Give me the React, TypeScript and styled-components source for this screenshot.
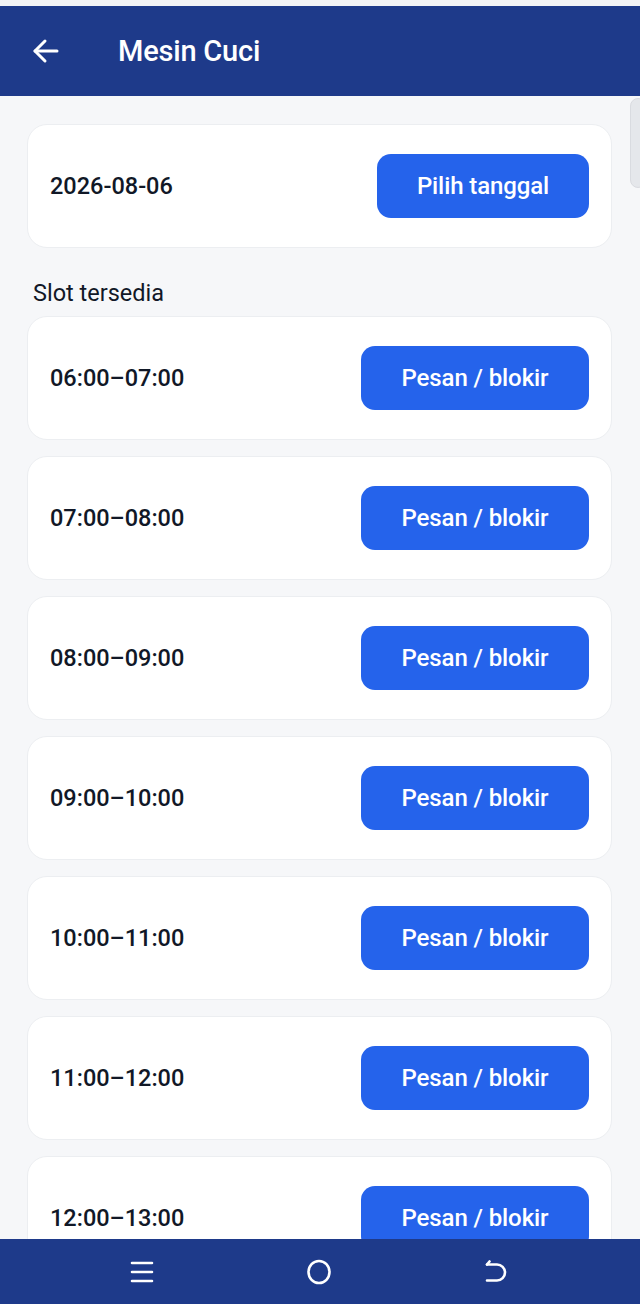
import styled, { createGlobalStyle } from "styled-components";

const GlobalStyle = createGlobalStyle`
    html, body {
        margin: 0;
        padding: 0;
        background: #f6f7f9;
        font-family: Roboto, "Noto Sans", "Liberation Sans", sans-serif;
    }
    * {
        box-sizing: border-box;
    }
`;

const Screen = styled.div`
    position: relative;
    display: flex;
    flex-direction: column;
    width: 640px;
    height: 1304px;
    overflow: hidden;
    background: #f6f7f9;
`;

const StatusStrip = styled.div`
    height: 6px;
    background: #f3f4f6;
    flex-shrink: 0;
`;

const Header = styled.header`
    display: flex;
    align-items: center;
    height: 90px;
    padding-left: 32px;
    background: #1e3a8a;
    color: white;
    flex-shrink: 0;

    .back {
        display: flex;
        width: 28px;
        height: 28px;
        margin-right: 58px;
    }

    .title {
        font-size: 29px;
        font-weight: 500;
        letter-spacing: -0.2px;
    }
`;

const Content = styled.main`
    flex: 1;
    display: flex;
    flex-direction: column;
    gap: 16px;
    padding: 28px 28px 0 27px;
    overflow: hidden;
`;

const Card = styled.div`
    display: flex;
    align-items: center;
    justify-content: space-between;
    flex-shrink: 0;
    height: 124px;
    padding: 0 22px;
    background: white;
    border: 1px solid #eceef1;
    border-radius: 20px;

    .label {
        font-size: 23.5px;
        font-weight: 500;
        color: #111827;
    }
`;

const ActionButton = styled.button<{ $width: number }>`
    width: ${(p) => p.$width}px;
    height: 64px;
    border: none;
    border-radius: 14px;
    background: #2563eb;
    color: white;
    font-family: inherit;
    font-size: 24px;
    font-weight: 500;
    letter-spacing: -0.1px;
`;

const SectionLabel = styled.div`
    margin: 17px 0 -5px 6px;
    font-size: 23.5px;
    color: #111827;
    line-height: 24px;
`;

const NavBar = styled.nav`
    position: relative;
    display: flex;
    justify-content: space-between;
    align-items: center;
    height: 65px;
    padding: 0 132px 0 130px;
    background: #1e3a8a;
    flex-shrink: 0;
    z-index: 1;

    svg {
        display: block;
    }
`;

const ScrollThumb = styled.div`
    position: absolute;
    top: 98px;
    right: -6px;
    width: 16px;
    height: 90px;
    border-radius: 8px;
    background: #e5e7eb;
    border: 1px solid #d9dbe0;
`;

const slots = [
    "06:00–07:00",
    "07:00–08:00",
    "08:00–09:00",
    "09:00–10:00",
    "10:00–11:00",
    "11:00–12:00",
    "12:00–13:00",
];

export default function App() {
    return (
        <Screen>
            <GlobalStyle />
            <StatusStrip />
            <Header>
                <span className="back">
                    <svg width="28" height="28" viewBox="0 0 28 28" fill="none" stroke="white" strokeWidth="3" strokeLinecap="round" strokeLinejoin="round">
                        <path d="M25 14H3" />
                        <path d="M13 4L3 14l10 10" />
                    </svg>
                </span>
                <span className="title">Mesin Cuci</span>
            </Header>
            <Content>
                <Card>
                    <span className="label">2026-08-06</span>
                    <ActionButton $width={212}>Pilih tanggal</ActionButton>
                </Card>
                <SectionLabel>Slot tersedia</SectionLabel>
                {slots.map((slot) => (
                    <Card key={slot}>
                        <span className="label">{slot}</span>
                        <ActionButton $width={228}>Pesan / blokir</ActionButton>
                    </Card>
                ))}
            </Content>
            <NavBar>
                <svg width="24" height="24" viewBox="0 0 24 24" fill="none" stroke="white" strokeWidth="2.6" strokeLinecap="round">
                    <path d="M2 3h20M2 12h20M2 21h20" />
                </svg>
                <svg width="26" height="26" viewBox="0 0 26 26" fill="none" stroke="white" strokeWidth="2.6">
                    <ellipse cx="13" cy="13" rx="10.5" ry="11" />
                </svg>
                <svg width="24" height="24" viewBox="0 0 24 24" fill="none" stroke="white" strokeWidth="2.6" strokeLinecap="round" strokeLinejoin="round">
                    <path d="M3 4.5l2.5-3" />
                    <path d="M3 4.5h10a8 8 0 0 1 0 16H3" />
                </svg>
            </NavBar>
            <ScrollThumb />
        </Screen>
    );
}
